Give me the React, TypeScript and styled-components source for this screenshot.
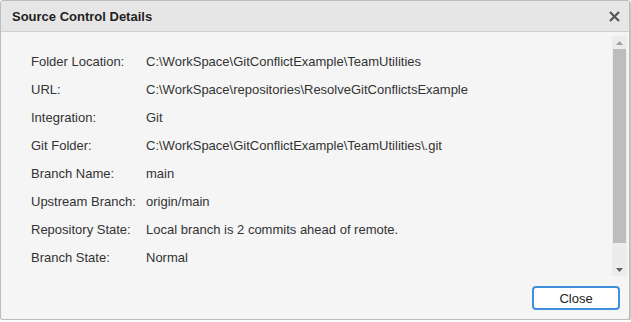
import React from "react";
import styled, { createGlobalStyle } from "styled-components";

interface DetailRow {
  label: string;
  value: string;
}

const rows: DetailRow[] = [
  { label: "Folder Location:", value: "C:\\WorkSpace\\GitConflictExample\\TeamUtilities" },
  { label: "URL:", value: "C:\\WorkSpace\\repositories\\ResolveGitConflictsExample" },
  { label: "Integration:", value: "Git" },
  { label: "Git Folder:", value: "C:\\WorkSpace\\GitConflictExample\\TeamUtilities\\.git" },
  { label: "Branch Name:", value: "main" },
  { label: "Upstream Branch:", value: "origin/main" },
  { label: "Repository State:", value: "Local branch is 2 commits ahead of remote." },
  { label: "Branch State:", value: "Normal" },
];

const GlobalStyle = createGlobalStyle`
  html, body {
    margin: 0;
    padding: 0;
    background: #ffffff;
  }
  body {
    font-family: "Liberation Sans", Arial, sans-serif;
  }
`;

const Dialog = styled.div`
  box-sizing: border-box;
  width: 630px;
  height: 320px;
  display: flex;
  flex-direction: column;
  background: #f5f5f5;
  border: 1px solid #bdbdbd;
  border-radius: 3px;
  box-shadow: 1px 1px 3px rgba(0, 0, 0, 0.35);
  overflow: hidden;
`;

const TitleBar = styled.div`
  flex: 0 0 30px;
  display: flex;
  align-items: center;
  justify-content: space-between;
  padding: 0 8px 0 11px;
  background: #e6e6e6;
  border-bottom: 1px solid #cfcfcf;
`;

const Title = styled.h3`
  margin: 0;
  font-size: 13px;
  font-weight: 700;
  color: #1f1f1f;
`;

const CloseIcon = styled.button`
  width: 14px;
  height: 14px;
  padding: 0;
  border: none;
  background: transparent;
  display: flex;
  align-items: center;
  justify-content: center;
  cursor: pointer;
`;

const Body = styled.div`
  flex: 0 0 244px;
  display: flex;
  padding-top: 4px;
  box-sizing: border-box;
`;

const Details = styled.div`
  flex: 1;
  padding: 11px 0 0 30px;
`;

const Row = styled.div`
  display: flex;
  align-items: center;
  height: 28px;
  font-size: 13px;
  color: #333333;
`;

const Label = styled.span`
  width: 115px;
`;

const Value = styled.span`
  white-space: nowrap;
`;

const Scrollbar = styled.div`
  width: 15px;
  margin-right: 2px;
  display: flex;
  flex-direction: column;
  align-items: center;
  background: #ececec;
`;

const ArrowBox = styled.div`
  height: 13px;
  display: flex;
  align-items: center;
  justify-content: center;
`;

const Thumb = styled.div`
  width: 13px;
  height: 194px;
  background: #bdbdbd;
`;

const Track = styled.div`
  flex: 1;
`;

const Footer = styled.div`
  flex: 1;
  display: flex;
  align-items: center;
  justify-content: flex-end;
  padding: 0 9px 0 0;
`;

const Button = styled.button`
  box-sizing: border-box;
  width: 88px;
  height: 24px;
  margin-top: 1px;
  background: #ffffff;
  border: 2px solid #3f8fdc;
  border-radius: 4px;
  font-family: "Liberation Sans", Arial, sans-serif;
  font-size: 13px;
  color: #222222;
  cursor: pointer;
`;

export default function App() {
  return (
    <>
      <GlobalStyle />
      <Dialog>
        <TitleBar>
          <Title>Source Control Details</Title>
          <CloseIcon aria-label="Close">
            <svg width="11" height="11" viewBox="0 0 11 11">
              <path d="M1 1L10 10M10 1L1 10" stroke="#555" strokeWidth="2.2" />
            </svg>
          </CloseIcon>
        </TitleBar>
        <Body>
          <Details>
            {rows.map((row) => (
              <Row key={row.label}>
                <Label>{row.label}</Label>
                <Value>{row.value}</Value>
              </Row>
            ))}
          </Details>
          <Scrollbar>
            <ArrowBox>
              <svg width="7" height="4" viewBox="0 0 7 4">
                <path d="M0 4L3.5 0L7 4Z" fill="#a0a0a0" />
              </svg>
            </ArrowBox>
            <Thumb />
            <Track />
            <ArrowBox>
              <svg width="7" height="4" viewBox="0 0 7 4">
                <path d="M0 0L3.5 4L7 0Z" fill="#606060" />
              </svg>
            </ArrowBox>
          </Scrollbar>
        </Body>
        <Footer>
          <Button>Close</Button>
        </Footer>
      </Dialog>
    </>
  );
}
